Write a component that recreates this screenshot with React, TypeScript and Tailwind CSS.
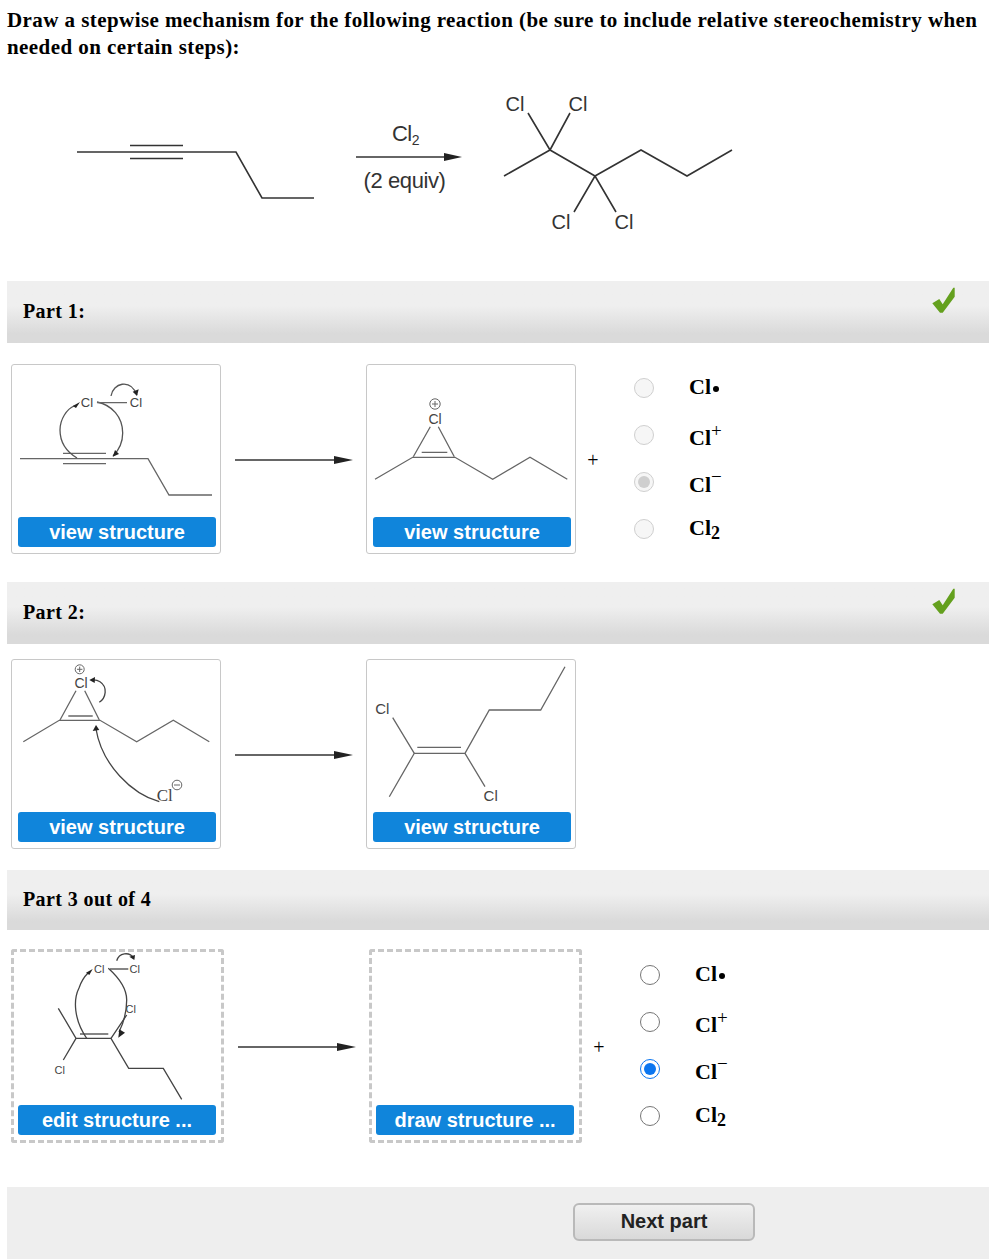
import React from 'react';

const serif = { fontFamily: '"Liberation Serif", "Times New Roman", serif' };
const sans = { fontFamily: '"Liberation Sans", Arial, sans-serif' };

// shared bits for the molecule drawings
function Atom({ x, y, size = 13, serifFace = false }: { x: number; y: number; size?: number; serifFace?: boolean }) {
  return (
    <text x={x} y={y} fontSize={size} textAnchor="middle" fill="#444" stroke="none" fontFamily={serifFace ? '"Liberation Serif", serif' : '"Liberation Sans", Arial, sans-serif'}>
      Cl
    </text>
  );
}

function Head({ points }: { points: string }) {
  return <polygon points={points} fill="#222" stroke="none" />;
}

function ArrowRight() {
  return (
    <svg width="118" height="12" viewBox="0 0 118 12" className="shrink-0">
      <path d="M0 6H104" stroke="#333" strokeWidth="1.6" />
      <polygon points="99,2 118,6 99,10" fill="#222" />
    </svg>
  );
}

function Part1Reactant() {
  return (
    <svg width="208" height="150" viewBox="0 0 208 150" fill="none" stroke="#666" strokeWidth="1.3">
      <path d="M8 93.7H136L157 130H200" />
      <path d="M51 88.3H94M51 98.7H94" />
      <path d="M65 93C50 84 48 72 48 65C48 54 55 44 62 41" stroke="#555" />
      <path d="M85 37C100 40 110.7 52 110.7 68C110.7 78 107 85 101 91" stroke="#555" />
      <path d="M85 37.6H115" />
      <path d="M99 31C101 18 118 13 125 30" stroke="#555" />
      <Head points="68,37 60.7,41 64,43" />
      <Head points="100.7,91.7 103,85 107,89" />
      <Head points="125,31 120.7,26.7 126.7,24.3" />
      <Atom x={75} y={42} />
      <Atom x={124} y={42} />
    </svg>
  );
}

function Part1Product() {
  return (
    <svg width="208" height="150" viewBox="0 0 208 150" fill="none" stroke="#666" strokeWidth="1.3">
      <path d="M8 114.3L45.7 92.3H88L125.7 114.3L163 92.3L200.3 114.3" />
      <path d="M46.3 91.7L63.3 61.7M87.3 91.7L71.3 61.7" />
      <path d="M54.7 87.3H80.3" />
      <circle cx="68" cy="39" r="5.2" strokeWidth="1" />
      <path d="M65 39H71M68 36V42" strokeWidth="1" />
      <Atom x={68} y={59} size={14} />
    </svg>
  );
}

function Part2Reactant() {
  return (
    <svg width="208" height="150" viewBox="0 0 208 150" fill="none" stroke="#666" strokeWidth="1.3">
      <path d="M11.3 81.7L47.3 60.3H88L124.7 81.7L161.3 60.3L197.3 81.7" />
      <path d="M48 60L64 30.7M87.3 60L72.7 30.7" />
      <path d="M56.3 56H80.7" />
      <circle cx="67.7" cy="9.3" r="4.5" strokeWidth="1" />
      <path d="M65 9.3H70.4M67.7 6.6V12" strokeWidth="1" />
      <path d="M87.3 42.3C94 38 96 27 88 21.7C85 19.8 82 19.8 80 20" stroke="#444" />
      <path d="M147.3 141.7C120 134 90 105 84 69" stroke="#444" />
      <circle cx="165" cy="125" r="4.8" strokeWidth="1" />
      <path d="M162 125H168" strokeWidth="1" />
      <Head points="77.3,20 83,17 82.7,23" />
      <Head points="84,65 80.7,71 87.3,70" />
      <Atom x={69} y={27.7} size={14} />
      <Atom x={152.7} y={140.7} size={17} serifFace />
    </svg>
  );
}

function Part2Product() {
  return (
    <svg width="208" height="150" viewBox="0 0 208 150" fill="none" stroke="#666" strokeWidth="1.3">
      <path d="M22.3 136.7L47.3 93.3H98L122.3 50H173.7L198 6.7" />
      <path d="M47.3 93.3L25.7 57.7M98 93.3L118 126.7" />
      <path d="M50.3 87.3H94" />
      <Atom x={15.3} y={54} size={15} />
      <Atom x={123.7} y={141} size={15} />
    </svg>
  );
}

function Part3Reactant() {
  return (
    <svg width="207" height="150" viewBox="0 0 207 150" fill="none" stroke="#444" strokeWidth="1.3">
      <path d="M44.3 56.3L62 86.3H97L114.7 116.3H149.3L167.7 147.3" />
      <path d="M62 86.3L49.3 108M97 86.3L112.7 63" />
      <path d="M66 82H94.3" />
      <path d="M72.7 86.3C60 68 59 48 65 36C67 30 71 24 74 21" />
      <path d="M94.3 16.3C104 25 112.7 36 112.7 48C112.7 62 108 74 105 80" />
      <path d="M96 17H114.3" />
      <path d="M102.7 8.7C105 1 115 -1 120 6.3" />
      <Head points="78.7,17 72,20.7 75.3,23" />
      <Head points="104.3,85.7 105.3,77.3 111,80.7" />
      <Head points="120.3,8 115.3,4.7 121,3" />
      <Atom x={85.3} y={21.3} size={11} />
      <Atom x={120.7} y={21.3} size={11} />
      <Atom x={116.7} y={61} size={11} />
      <Atom x={45.7} y={122} size={11} />
    </svg>
  );
}

function StructureCard({ children, label = 'view structure' }: { children: React.ReactNode; label?: string }) {
  return (
    <div className="w-[210px] h-[190px] shrink-0 bg-white border border-[#c8c8c8] rounded-[3px] flex flex-col justify-between overflow-hidden">
      {children}
      <div className="ml-[6px] mr-[4px] mb-[6px] h-[30px] bg-[#1085db] rounded-[3px] text-white text-[20px] font-bold flex items-center justify-center" style={sans}>
        {label}
      </div>
    </div>
  );
}

function DashedCard({ children, label }: { children?: React.ReactNode; label: string }) {
  return (
    <div className="w-[213px] h-[194px] shrink-0 border-[3px] border-dashed border-[#c8c8c8] rounded-[3px] flex flex-col justify-between overflow-hidden">
      <div className="h-[150px] w-full">{children}</div>
      <div className="ml-[4px] mr-[5px] mb-[5px] h-[30px] bg-[#1085db] rounded-[3px] text-white text-[20px] font-bold flex items-center justify-center" style={sans}>
        {label}
      </div>
    </div>
  );
}

function PartBar({ title, check, tall = true }: { title: string; check?: boolean; tall?: boolean }) {
  return (
    <div className={`${tall ? 'h-[62px]' : 'h-[60px]'} mx-[7px] w-[982px] bg-gradient-to-b from-[#efefef] from-40% to-[#dadada] to-85% flex items-center pl-4 pb-[2px] relative`}>
      <span className="text-[20px] font-bold text-black tracking-[0.4px]" style={serif}>{title}</span>
      {check && (
        <svg width="24" height="27" viewBox="0 0 24 27" className="absolute left-[925px] top-[6px]">
          <path d="M0.3 16.3L7.3 12L10.7 17.3L21.3 0.7H22.7V9.7L10.7 25.7H8Z" fill="#64a01e" />
        </svg>
      )}
    </div>
  );
}

function ChoiceLabel({ kind }: { kind: number }) {
  return (
    <span className={`text-[22px] font-bold text-black leading-none inline-block ${kind === 1 || kind === 2 ? 'translate-y-[4px]' : ''}`} style={serif}>
      Cl
      {kind === 0 && <span className="inline-block w-[6px] h-[6px] rounded-full bg-black ml-[2px] mb-[2px]" />}
      {kind === 1 && <sup className="text-[19px] font-normal top-[-8px]">+</sup>}
      {kind === 2 && <sup className="text-[19px] font-normal top-[-9px]">−</sup>}
      {kind === 3 && <sub className="text-[18px]">2</sub>}
    </span>
  );
}

function Choices({ disabled }: { disabled?: boolean }) {
  return (
    <div className="flex flex-col gap-[27px]">
      {[0, 1, 2, 3].map((i) => {
        const on = i === 2;
        const ring = disabled ? 'border-[#cfcfcf] bg-[#f6f6f6]' : on ? 'border-[#0b76f0] bg-white' : 'border-[#767676] bg-white';
        const dot = disabled ? 'bg-[#cfcfcf]' : 'bg-[#0b76f0]';
        return (
          <div key={i} className="flex items-center h-[20px]">
            <span className={`w-[20px] h-[20px] rounded-full border flex items-center justify-center ${ring}`}>
              {on && <span className={`w-[12px] h-[12px] rounded-full ${dot}`} />}
            </span>
            <span className="ml-[35px]"><ChoiceLabel kind={i} /></span>
          </div>
        );
      })}
    </div>
  );
}

function Plus() {
  return <span className="block text-[20px] text-black leading-none w-[14px] text-center" style={serif}>+</span>;
}

export default function App() {
  return (
    <div className="w-[993px] h-[1259px] bg-white overflow-hidden" style={serif}>
      {/* Question */}
      <p className="px-[7px] pt-[7px] text-[21px] leading-[27px] font-bold text-black tracking-[0.43px]">
        Draw a stepwise mechanism for the following reaction (be sure to include relative stereochemistry when needed on certain steps):
      </p>

      {/* Overall reaction */}
      <div className="h-[220px] flex items-start pl-[76px]">
        <svg width="240" height="120" viewBox="0 0 240 120" className="shrink-0 mt-[59px]" fill="none" stroke="#333" strokeWidth="1.6">
          <path d="M1 32H160L186 78H238" />
          <path d="M54 25.5H107M54 38.5H107" />
        </svg>
        <div className="w-[107px] ml-[40px] mt-[60px] flex flex-col items-center text-[22px] text-[#333]" style={sans}>
          <span className="leading-[26px] h-[26px] tracking-[-0.5px] mr-[8px]">Cl<sub className="text-[14px]">2</sub></span>
          <svg width="107" height="12" viewBox="0 0 107 12" className="mt-[4px] mb-[5px]">
            <path d="M0 6H92" stroke="#333" strokeWidth="1.6" />
            <polygon points="88,2 106,6 88,10" fill="#222" />
          </svg>
          <span className="leading-[26px] tracking-[-0.4px] mr-[10px]">(2 equiv)</span>
        </div>
        <svg width="260" height="160" viewBox="0 0 260 160" className="shrink-0 ml-[27px] mt-[19px]" fill="none" stroke="#333" strokeWidth="1.6">
          <path d="M14 96L60 70L105 96L151 70L197 96L242 70" />
          <path d="M60 70L38 33M60 70L80 33M105 96L84 132M105 96L126 132" />
          <g fill="#333" stroke="none" fontSize="20" textAnchor="middle" fontFamily='"Liberation Sans", Arial, sans-serif'>
            <text x="25" y="31">Cl</text>
            <text x="88" y="31">Cl</text>
            <text x="71" y="149">Cl</text>
            <text x="134" y="149">Cl</text>
          </g>
        </svg>
      </div>

      <PartBar title="Part 1:" check />
      <div className="h-[239px] pt-[21px] pl-[11px] flex items-start">
        <StructureCard><Part1Reactant /></StructureCard>
        <div className="mt-[90px] ml-[14px]"><ArrowRight /></div>
        <div className="ml-[13px]"><StructureCard><Part1Product /></StructureCard></div>
        <div className="mt-[86px] ml-[10px]"><Plus /></div>
        <div className="mt-[14px] ml-[34px]"><Choices disabled /></div>
      </div>

      <PartBar title="Part 2:" check />
      <div className="h-[226px] pt-[15px] pl-[11px] flex items-start">
        <StructureCard><Part2Reactant /></StructureCard>
        <div className="mt-[90px] ml-[14px]"><ArrowRight /></div>
        <div className="ml-[13px]"><StructureCard><Part2Product /></StructureCard></div>
      </div>

      <PartBar title="Part 3 out of 4" tall={false} />
      <div className="h-[257px] pt-[19px] pl-[11px] flex items-start">
        <DashedCard label="edit structure ..."><Part3Reactant /></DashedCard>
        <div className="mt-[92px] ml-[14px]"><ArrowRight /></div>
        <div className="ml-[13px]"><DashedCard label="draw structure ..." /></div>
        <div className="mt-[88px] ml-[10px]"><Plus /></div>
        <div className="mt-[16px] ml-[34px]"><Choices /></div>
      </div>

      {/* Footer */}
      <div className="mx-[7px] w-[982px] h-[72px] bg-[#eeeeee] pt-[16px] pl-[566px]">
        <button className="w-[182px] h-[38px] pb-[2px] rounded-[6px] border-2 border-[#b9b9b9] bg-gradient-to-b from-[#f0f0f0] to-[#d9d9d9] text-[20px] font-bold text-[#222]" style={sans}>
          Next part
        </button>
      </div>
    </div>
  );
}
